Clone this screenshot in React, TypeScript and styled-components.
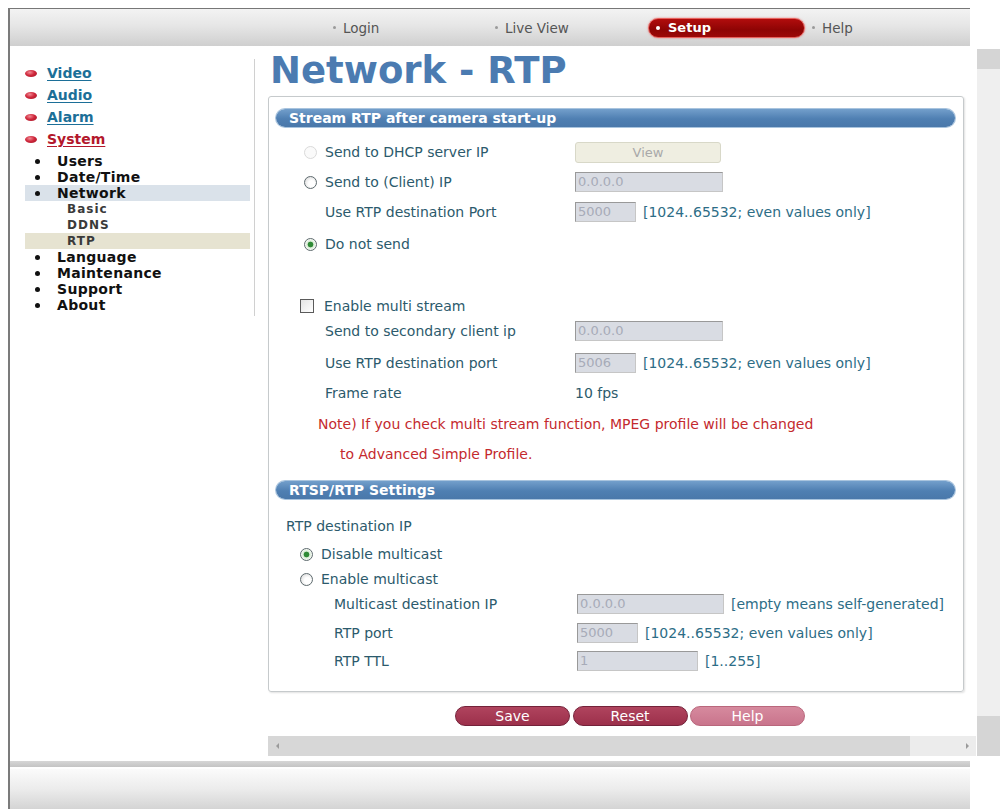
import React from "react";
import styled, { createGlobalStyle } from "styled-components";

const GlobalStyle = createGlobalStyle`
  html, body {
    margin: 0;
    padding: 0;
    background: #fff;
  }
  body {
    font-family: "DejaVu Sans", Verdana, sans-serif;
    font-size: 14px;
    color: #2c5a6c;
  }
`;

const Page = styled.div`
  width: 1001px;
  height: 809px;
  overflow: hidden;
  padding: 8px 0 0 8px;
  box-sizing: border-box;
`;

const Frame = styled.div`
  border-left: 2px solid #7b7b7b;
  height: 801px;
  display: flex;
  flex-direction: column;
`;

/* ---------- top navigation ---------- */

const TopBar = styled.div`
  width: 960px;
  height: 38px;
  border-top: 1px solid #777;
  background: linear-gradient(#f3f3f3 0%, #e6e6e6 45%, #cfcfcf 100%);
  display: flex;
  align-items: center;
  padding-left: 323px;
  box-sizing: border-box;
`;

const TopItem = styled.div<{ $w?: number }>`
  width: ${(p) => (p.$w ? `${p.$w}px` : "auto")};
  display: flex;
  align-items: center;
  gap: 7px;
  color: #555;
  font-size: 13.5px;
  &::before {
    content: "";
    width: 3px;
    height: 3px;
    border-radius: 50%;
    background: #9a9a9a;
  }
`;

const ActiveItem = styled.div`
  width: 157px;
  height: 20px;
  margin-right: 7px;
  box-sizing: border-box;
  border-radius: 10px;
  border: 1px solid #e8625e;
  background: linear-gradient(#b10d0d, #8e0404 60%, #9c0808);
  box-shadow: 0 0 2px rgba(230, 70, 70, 0.7);
  display: flex;
  align-items: center;
  gap: 8px;
  padding-left: 7px;
  color: #fff;
  font-weight: bold;
  font-size: 13px;
  &::before {
    content: "";
    width: 4px;
    height: 4px;
    border-radius: 50%;
    background: #fff;
  }
`;

/* ---------- middle area ---------- */

const Middle = styled.div`
  display: flex;
  height: 713px;
`;

const SideNav = styled.div`
  width: 245px;
  height: 257px;
  margin-top: 13px;
  padding: 3px 0 0 15px;
  box-sizing: border-box;
  border-right: 1px solid #d0d0d0;
`;

const MainLink = styled.div<{ $red?: boolean }>`
  height: 22px;
  display: flex;
  align-items: center;
  gap: 10px;
  font-weight: bold;
  font-size: 14px;
  a {
    color: ${(p) => (p.$red ? "#b3182c" : "#1c6f98")};
    text-decoration: underline;
    text-underline-offset: 2px;
  }
`;

const Pill = styled.span`
  width: 12px;
  height: 7px;
  border-radius: 50%;
  background: radial-gradient(ellipse at 40% 35%, #f08a94 0, #d0283c 45%, #9c1224 100%);
`;

const SubList = styled.div`
  margin-top: 3px;
`;

const SubItem = styled.div<{ $band?: string; $deep?: boolean }>`
  height: 16px;
  display: flex;
  align-items: center;
  padding-left: ${(p) => (p.$deep ? "42px" : "10px")};
  width: 225px;
  box-sizing: border-box;
  background: ${(p) => p.$band || "transparent"};
  font-weight: bold;
  font-size: ${(p) => (p.$deep ? "12px" : "14px")};
  letter-spacing: ${(p) => (p.$deep ? "1px" : "0.3px")};
  color: ${(p) => (p.$deep ? "#3a3a3a" : "#111")};
  ${(p) =>
    !p.$deep &&
    `&::before {
      content: "";
      width: 5px;
      height: 5px;
      border-radius: 50%;
      background: #111;
      margin-right: 17px;
    }`}
`;

const MainArea = styled.div`
  display: flex;
  padding-left: 3px;
`;

const Content = styled.div`
  width: 718px;
  display: flex;
  flex-direction: column;
`;

const Title = styled.h1`
  margin: 0;
  height: 50px;
  line-height: 50px;
  padding-left: 12px;
  font-size: 37px;
  font-weight: bold;
  color: #4b7bb1;
`;

const Panel = styled.div`
  margin-left: 10px;
  width: 696px;
  height: 596px;
  box-sizing: border-box;
  border: 1px solid #c6cacc;
  border-radius: 3px;
  box-shadow: 1px 1px 2px rgba(0, 0, 0, 0.12);
  padding: 12px 8px 0 7px;
`;

const SectionBar = styled.div<{ $mt?: number }>`
  height: 18px;
  margin-top: ${(p) => p.$mt || 0}px;
  border-radius: 9px;
  background: linear-gradient(#739fcb, #4f7fb2 55%, #4a78aa);
  box-shadow: 0 0 0 1px #a9c4de;
  color: #fff;
  font-weight: bold;
  font-size: 14px;
  line-height: 18px;
  padding-left: 13px;
`;

const Row = styled.div<{ $h: number; $mt?: number; $pl: number }>`
  height: ${(p) => p.$h}px;
  margin-top: ${(p) => p.$mt || 0}px;
  padding-left: ${(p) => p.$pl}px;
  display: flex;
  align-items: center;
`;

const Label = styled.span<{ $w?: number }>`
  width: ${(p) => (p.$w ? `${p.$w}px` : "auto")};
  flex: none;
  white-space: nowrap;
`;

const Note = styled.span`
  color: #c42a2e;
  white-space: nowrap;
`;

const Radio = styled.span<{ $on?: boolean; $off?: boolean }>`
  width: 13px;
  height: 13px;
  flex: none;
  margin-right: 8px;
  box-sizing: border-box;
  border-radius: 50%;
  border: 1px solid ${(p) => (p.$off ? "#dadada" : "#5e6a6e")};
  background: ${(p) =>
    p.$on
      ? "radial-gradient(circle, #2f8a36 0 2.5px, #d6ead2 3.2px, #fff 6px)"
      : p.$off
        ? "#fafafa"
        : "radial-gradient(circle at 60% 60%, #fff 0 3px, #e2e2e2 7px)"};
`;

const Check = styled.span`
  width: 14px;
  height: 14px;
  flex: none;
  margin-right: 10px;
  box-sizing: border-box;
  border: 1px solid #5a5a5a;
  background: linear-gradient(135deg, #e4e4e4, #fff);
`;

const Field = styled.span<{ $w: number }>`
  width: ${(p) => p.$w}px;
  height: 20px;
  flex: none;
  box-sizing: border-box;
  border: 1px solid #999;
  border-right-color: #c6c6c6;
  border-bottom-color: #c6c6c6;
  background: #d9dce3;
  color: #a7abb8;
  font-size: 13px;
  line-height: 18px;
  padding-left: 2px;
`;

const ViewButton = styled.span`
  width: 146px;
  height: 21px;
  box-sizing: border-box;
  border: 1px solid #d8d8c8;
  border-radius: 3px;
  background: #efeee1;
  color: #a9a9a9;
  font-size: 13px;
  text-align: center;
  line-height: 19px;
`;

const Hint = styled.span`
  margin-left: 7px;
  color: #2d6d86;
  white-space: nowrap;
`;

const Actions = styled.div`
  margin-top: 14px;
  padding-left: 197px;
  display: flex;
  gap: 2.5px;
`;

const ActionButton = styled.span<{ $soft?: boolean }>`
  width: 115px;
  height: 20px;
  box-sizing: border-box;
  border-radius: 10px;
  border: 1px solid ${(p) => (p.$soft ? "#b9677c" : "#74223a")};
  background: ${(p) =>
    p.$soft ? "linear-gradient(#d68a9e, #c9748c)" : "linear-gradient(#b0445e, #9c304b)"};
  color: #fff;
  font-size: 14px;
  line-height: 18px;
  text-align: center;
`;

const HScroll = styled.div`
  margin: 10px 0 0 10px;
  width: 708px;
  height: 20px;
  display: flex;
  background: #ececec;
`;

const HThumb = styled.div`
  width: 642px;
  background: #d7d7d7;
  display: flex;
  align-items: center;
  padding-left: 8px;
  box-sizing: border-box;
`;

const Arrow = styled.span<{ $right?: boolean }>`
  width: 0;
  height: 0;
  border-top: 3px solid transparent;
  border-bottom: 3px solid transparent;
  ${(p) => (p.$right ? "border-left: 3px solid #9a9a9a;" : "border-right: 3px solid #9a9a9a;")}
`;

const HEnd = styled.div`
  margin-left: auto;
  width: 18px;
  display: flex;
  align-items: center;
  justify-content: center;
`;

const VScroll = styled.div`
  margin: 3px 0 0 1px;
  width: 23px;
  height: 707px;
  display: flex;
  flex-direction: column;
  background: #efefef;
`;

const VBlock = styled.div<{ $h: number }>`
  height: ${(p) => p.$h}px;
  background: #d5d5d5;
`;

const VTrack = styled.div`
  flex: 1;
`;

/* ---------- bottom ---------- */

const BottomLine = styled.div`
  margin-top: 2px;
  width: 960px;
  height: 6px;
  background: linear-gradient(#d6d6d6, #c4c4c4);
`;

const BottomBar = styled.div`
  margin-top: 2px;
  width: 960px;
  flex: 1;
  background: linear-gradient(#fbfbfb, #ececec 50%, #d4d4d4);
`;

const navMain = [
  { label: "Video" },
  { label: "Audio" },
  { label: "Alarm" },
  { label: "System", red: true },
];

const navSub: { label: string; deep?: boolean; band?: string }[] = [
  { label: "Users" },
  { label: "Date/Time" },
  { label: "Network", band: "#dae2ea" },
  { label: "Basic", deep: true },
  { label: "DDNS", deep: true },
  { label: "RTP", deep: true, band: "#e6e3d1" },
  { label: "Language" },
  { label: "Maintenance" },
  { label: "Support" },
  { label: "About" },
];

export default function App() {
  return (
    <>
      <GlobalStyle />
      <Page>
        <Frame>
          <TopBar>
            <TopItem $w={162}>Login</TopItem>
            <TopItem $w={153}>Live View</TopItem>
            <ActiveItem>Setup</ActiveItem>
            <TopItem>Help</TopItem>
          </TopBar>

          <Middle>
            <SideNav>
              {navMain.map((n) => (
                <MainLink key={n.label} $red={n.red}>
                  <Pill />
                  <a>{n.label}</a>
                </MainLink>
              ))}
              <SubList>
                {navSub.map((s) => (
                  <SubItem key={s.label} $deep={s.deep} $band={s.band}>
                    {s.label}
                  </SubItem>
                ))}
              </SubList>
            </SideNav>

            <MainArea>
              <Content>
                <Title>Network - RTP</Title>
                <Panel>
                  <SectionBar>Stream RTP after camera start-up</SectionBar>
                  <Row $h={30} $mt={10} $pl={28}>
                    <Radio $off />
                    <Label $w={250}>Send to DHCP server IP</Label>
                    <ViewButton>View</ViewButton>
                  </Row>
                  <Row $h={30} $pl={28}>
                    <Radio />
                    <Label $w={250}>Send to (Client) IP</Label>
                    <Field $w={148}>0.0.0.0</Field>
                  </Row>
                  <Row $h={30} $pl={49}>
                    <Label $w={250}>Use RTP destination Port</Label>
                    <Field $w={61}>5000</Field>
                    <Hint>[1024..65532; even values only]</Hint>
                  </Row>
                  <Row $h={30} $mt={2} $pl={28}>
                    <Radio $on />
                    <Label>Do not send</Label>
                  </Row>

                  <Row $h={24} $mt={35} $pl={24}>
                    <Check />
                    <Label>Enable multi stream</Label>
                  </Row>
                  <Row $h={26} $pl={49}>
                    <Label $w={250}>Send to secondary client ip</Label>
                    <Field $w={148}>0.0.0.0</Field>
                  </Row>
                  <Row $h={30} $mt={4} $pl={49}>
                    <Label $w={250}>Use RTP destination port</Label>
                    <Field $w={61}>5006</Field>
                    <Hint>[1024..65532; even values only]</Hint>
                  </Row>
                  <Row $h={30} $pl={49}>
                    <Label $w={250}>Frame rate</Label>
                    <Label>10 fps</Label>
                  </Row>
                  <Row $h={30} $mt={1} $pl={42}>
                    <Note>Note) If you check multi stream function, MPEG profile will be changed</Note>
                  </Row>
                  <Row $h={30} $pl={64}>
                    <Note>to Advanced Simple Profile.</Note>
                  </Row>

                  <SectionBar $mt={12}>RTSP/RTP Settings</SectionBar>
                  <Row $h={30} $mt={12} $pl={10}>
                    <Label>RTP destination IP</Label>
                  </Row>
                  <Row $h={26} $pl={24}>
                    <Radio $on />
                    <Label>Disable multicast</Label>
                  </Row>
                  <Row $h={24} $pl={24}>
                    <Radio />
                    <Label>Enable multicast</Label>
                  </Row>
                  <Row $h={26} $pl={58}>
                    <Label $w={243}>Multicast destination IP</Label>
                    <Field $w={147}>0.0.0.0</Field>
                    <Hint>[empty means self-generated]</Hint>
                  </Row>
                  <Row $h={28} $mt={2} $pl={58}>
                    <Label $w={243}>RTP port</Label>
                    <Field $w={61}>5000</Field>
                    <Hint>[1024..65532; even values only]</Hint>
                  </Row>
                  <Row $h={28} $pl={58}>
                    <Label $w={243}>RTP TTL</Label>
                    <Field $w={121}>1</Field>
                    <Hint>[1..255]</Hint>
                  </Row>
                </Panel>

                <Actions>
                  <ActionButton>Save</ActionButton>
                  <ActionButton>Reset</ActionButton>
                  <ActionButton $soft>Help</ActionButton>
                </Actions>

                <HScroll>
                  <HThumb>
                    <Arrow />
                  </HThumb>
                  <HEnd>
                    <Arrow $right />
                  </HEnd>
                </HScroll>
              </Content>

              <VScroll>
                <VBlock $h={20} />
                <VTrack />
                <VBlock $h={40} />
              </VScroll>
            </MainArea>
          </Middle>

          <BottomLine />
          <BottomBar />
        </Frame>
      </Page>
    </>
  );
}
